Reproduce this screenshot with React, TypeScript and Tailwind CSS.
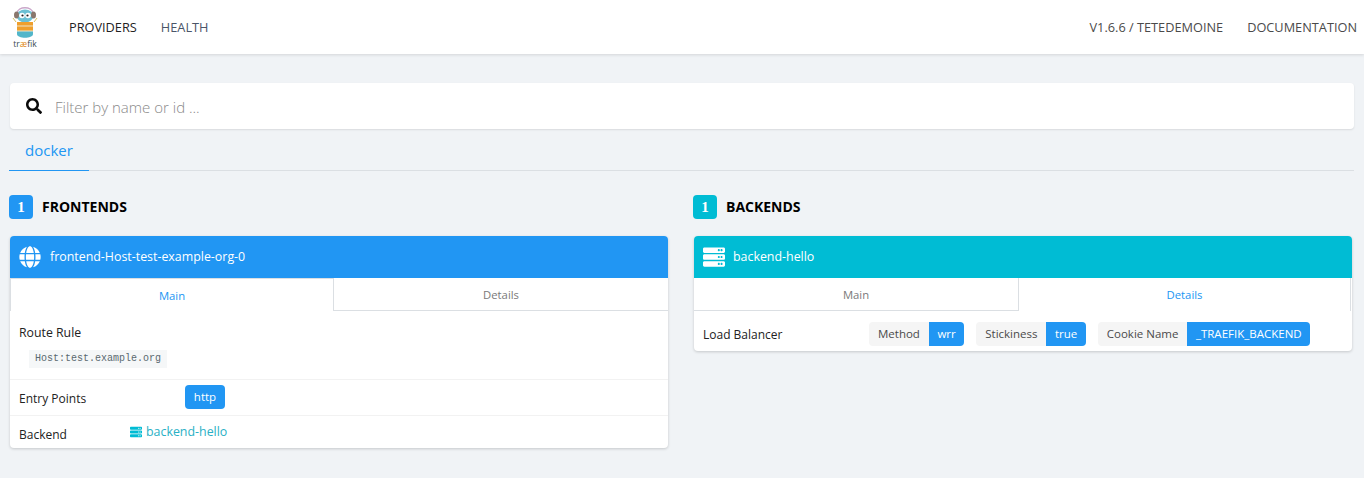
import { FaGlobe, FaSearch, FaServer } from 'react-icons/fa';

function Logo() {
  return (
    <div className="flex flex-col items-center w-[26px] -mt-[1px]">
      <svg width="26" height="33" viewBox="0 0 26 33">
        <path d="M5 7 C6 0 20 0 21 7" fill="none" stroke="#c9a6c9" strokeWidth="1.5" />
        <ellipse cx="13" cy="10" rx="8.5" ry="6.5" fill="#6cc0d3" />
        <ellipse cx="4.5" cy="9" rx="2.5" ry="3.5" fill="#8a766c" />
        <ellipse cx="21.5" cy="9" rx="2.5" ry="3.5" fill="#8a766c" />
        <circle cx="10" cy="9.5" r="2.8" fill="#fff" />
        <circle cx="16" cy="9.5" r="2.8" fill="#fff" />
        <circle cx="10.5" cy="9.5" r="1.1" fill="#222" />
        <circle cx="15.5" cy="9.5" r="1.1" fill="#222" />
        <path d="M5 16 H21 V25 H5 Z" fill="#ef9f2c" />
        <path d="M5 25 H21 V28 C21 33 5 33 5 28 Z" fill="#52b6ca" />
        <path d="M5 20 H21 M5 25 H21" stroke="#eee4c8" strokeWidth="1" />
        <path d="M4 16 L1 12 M22 16 L25 12" stroke="#d8c060" strokeWidth="1" />
      </svg>
      <span className="text-[8.5px] leading-[8px] text-[#3a4a50] font-['Open_Sans'] mt-[1px]">
        tr<span className="text-[#e08a20]">æ</span>fik
      </span>
    </div>
  );
}

function Badge({ color }: { color: string }) {
  return (
    <div className={`w-6 h-6 -ml-px rounded-[4px] flex items-center justify-center text-white text-[15px] font-bold font-['Liberation_Serif',serif] ${color}`}>
      1
    </div>
  );
}

function Tag({ label, value }: { label: string; value: string }) {
  return (
    <div className="flex h-6 text-[11.5px] leading-6 rounded-[4px] overflow-hidden">
      <span className="px-[9px] bg-[#f5f5f5] text-[#4a4a4a]">{label}</span>
      <span className="px-[8.5px] bg-[#2196f3] text-white font-medium">{value}</span>
    </div>
  );
}

export default function App() {
  return (
    <div className="w-[1364px] h-[478px] overflow-hidden bg-[#f0f3f6] font-['Open_Sans',sans-serif] text-[#111]">
      <nav className="h-[54px] bg-white shadow-[0_1px_3px_rgba(0,0,0,0.12)] flex items-center pl-[12px] pr-[7px] text-[12.75px]">
        <Logo />
        <a className="ml-[31px] pt-[1px] text-[#222]">PROVIDERS</a>
        <a className="ml-6 pt-[1px] text-[#4a5568]">HEALTH</a>
        <span className="ml-auto pt-[1px] text-[#4a4a4a]">V1.6.6 / TETEDEMOINE</span>
        <a className="ml-6 pt-[1px] text-[#4a4a4a]">DOCUMENTATION</a>
      </nav>

      <div className="pl-[10px] pr-[10px] pt-[29px]">
        <div className="h-[46px] bg-white rounded-[4px] shadow-[0_1px_2px_rgba(0,0,0,0.1)] flex items-center pl-[16px] text-[15px] text-[#8a8a8a] font-light">
          <FaSearch className="text-[#0a0a0a] w-[16px] h-[16px] mr-[13px]" />
          <span className="pt-[2px]">Filter by name or id ...</span>
        </div>

        <div className="h-[42px] border-b border-[#dbdfe3] flex">
          <div className="w-[80px] h-[42px] border-b border-[#2196f3] text-[#2196f3] text-[15px] text-center leading-[42px] -ml-px">
            docker
          </div>
        </div>

        <div className="flex gap-[26px] pt-6 items-start">
          <section className="w-[658px]">
            <div className="flex items-center h-6 gap-[9px] mb-[17px]">
              <Badge color="bg-[#2196f3]" />
              <h2 className="text-[14px] font-bold text-black -mt-[2px]">FRONTENDS</h2>
            </div>
            <div className="bg-white rounded-[4px] shadow-[0_1px_3px_rgba(0,0,0,0.18)] overflow-hidden">
              <div className="h-[42px] bg-[#2196f3] flex items-center pl-[9px] gap-[9px] text-white text-[12.4px]">
                <FaGlobe className="w-[22px] h-[22px]" />
                frontend-Host-test-example-org-0
              </div>
              <div className="flex h-[33px] text-[11.3px] text-center leading-[33px]">
                <div className="w-[324px] border border-b-0 border-[#dbdfe3] text-[#2196f3]">Main</div>
                <div className="flex-1 border-b border-[#dbdfe3] text-[#7a7a7a]">Details</div>
              </div>
              <div className="h-[69px] border-b border-[#f2f2f2] pl-[9px] pt-[13px] text-[12.3px] text-[#222] leading-[18px]">
                Route Rule
                <div className="mt-[8px] ml-[10px] w-fit h-[18px] px-[6px] bg-[#f5f7f8] text-[#5a6a70] text-[10px] leading-[18px] font-['Liberation_Mono',monospace]">
                  Host:test.example.org
                </div>
              </div>
              <div className="h-[36px] border-b border-[#f2f2f2] pl-[9px] flex items-center text-[12px] text-[#222]">
                <span className="w-[166px] pt-[2px]">Entry Points</span>
                <span className="h-6 w-10 rounded-[4px] bg-[#2196f3] text-white text-[11.5px] leading-6 text-center font-medium -mt-[2px]">
                  http
                </span>
              </div>
              <div className="h-[32px] pl-[9px] flex items-center text-[12px] text-[#222]">
                <span className="w-[111px] pt-[6px]">Backend</span>
                <FaServer className="w-3 h-3 text-[#00bcd4] mr-1" />
                <span className="text-[#29b0c5] text-[12.4px]">backend-hello</span>
              </div>
            </div>
          </section>

          <section className="w-[658px]">
            <div className="flex items-center h-6 gap-[9px] mb-[17px]">
              <Badge color="bg-[#00bcd4]" />
              <h2 className="text-[14px] font-bold text-black -mt-[2px]">BACKENDS</h2>
            </div>
            <div className="bg-white rounded-[4px] shadow-[0_1px_3px_rgba(0,0,0,0.18)] overflow-hidden">
              <div className="h-[42px] bg-[#00bcd4] flex items-center pl-[9px] gap-[8px] text-white text-[12.4px]">
                <FaServer className="w-[22px] h-[22px]" />
                backend-hello
              </div>
              <div className="flex h-[33px] text-[11.3px] text-center leading-[33px]">
                <div className="w-[325px] border-b border-r border-[#dbdfe3] text-[#7a7a7a]">Main</div>
                <div className="flex-1 mr-px border-r border-[#dbdfe3] text-[#2196f3]">Details</div>
              </div>
              <div className="h-[40px] pl-[9px] flex items-center text-[12px] text-[#222]">
                <span className="w-[166px] pt-[8px]">Load Balancer</span>
                <div className="flex gap-3 mt-[6px]">
                  <Tag label="Method" value="wrr" />
                  <Tag label="Stickiness" value="true" />
                  <Tag label="Cookie Name" value="_TRAEFIK_BACKEND" />
                </div>
              </div>
            </div>
          </section>
        </div>
      </div>
    </div>
  );
}
